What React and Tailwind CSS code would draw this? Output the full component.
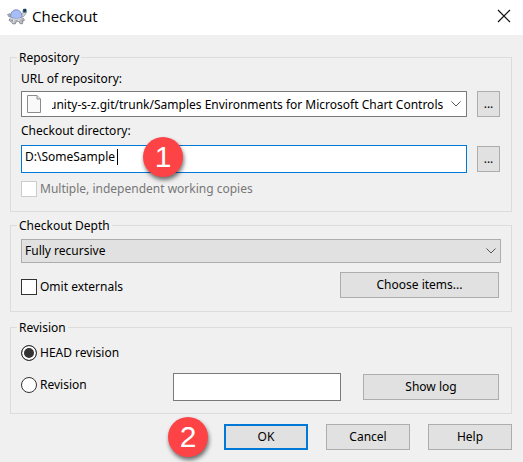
import { useEffect, useRef } from "react";

const BUTTON =
  "h-[26px] border border-[#adadad] bg-[#e1e1e1] text-center leading-4";

function Turtle() {
  return (
    <svg width="20" height="17" viewBox="0 0 20 17" aria-hidden="true">
      <path d="M.5 6.500 3 5.600l2 2.400-3 1z" fill="#a9acb4" stroke="#8c909a" strokeWidth=".7" />
      <path d="M3.500 10 2 12.200l1.400 1.200 2.100-1-.8 2.200 1 1.200h2.600l1.200-2.600h2.200l1.400 2.400 2.200.2.5-1.200-.7-1.800 1.600.2.7-1.200-1.800-2z" fill="#b9bbc1" stroke="#747882" strokeWidth=".8" />
      <path d="M14 7.200 16 5 15.800 2.400 18.200.8l1.200 1v2.800l-2 3.200-2.800 2z" fill="#d0d2d8" stroke="#8c909a" strokeWidth=".7" />
      <path d="M3.600 9.200C3.400 4.600 5.600 1.800 9.200 1.800s5.600 2.800 5.800 7.400c-3 1.800-8.400 1.800-11.400 0z" fill="#a6bdf8" stroke="#7685b0" strokeWidth=".9" />
      <path d="M2.800 9.600c2.600 2 9.600 2 12.800 0" fill="none" stroke="#e2e3e8" strokeWidth="1" />
      <path d="M6 12.500h1.500M11 12.500h1.500M5.500 14h1.500" stroke="#eeeeee" strokeWidth=".9" />
      <rect x="16.200" y=".9" width="3" height="3.600" fill="#123f5c" />
    </svg>
  );
}

function PageIcon() {
  return (
    <svg width="16" height="20" viewBox="0 0 16 20" className="shrink-0" aria-hidden="true">
      <path d="M1.500 1.500h9.500l3.500 3.500v13.500h-13z" fill="#f9f9f9" stroke="#8c8c8c" />
      <path d="M11 1.500v3.500h3.500" fill="#e4e4e4" stroke="#8c8c8c" />
    </svg>
  );
}

function Chevron() {
  return (
    <svg width="10" height="6" viewBox="0 0 10 6" className="shrink-0" aria-hidden="true">
      <path d="M.5.5 5 5 9.500.5" fill="none" stroke="#555" />
    </svg>
  );
}

function Badge({ children, className }) {
  return (
    <span
      className={`absolute flex size-10 items-center justify-center rounded-full bg-[#fd4345] font-['Liberation_Sans',Arial,sans-serif] text-[30px] leading-none text-white shadow-[1px_3px_4px_rgba(0,0,0,0.55)] ${className}`}
    >
      {children}
    </span>
  );
}

function Group({ title, className, children }) {
  return (
    <fieldset className={`min-w-0 border border-[#dcdcdc] px-2.5 ${className}`}>
      <legend className="-ml-1 h-[15px] px-0.5 leading-[15px]">{title}</legend>
      {children}
    </fieldset>
  );
}

function Radio({ label, checked }) {
  return (
    <label className="flex items-center gap-[3px] leading-4">
      <input
        type="radio"
        name="revision"
        defaultChecked={checked}
        className="size-4 appearance-none rounded-full border border-[#333] bg-white checked:bg-[#333] checked:shadow-[inset_0_0_0_2px_white]"
      />
      {label}
    </label>
  );
}

export default function App() {
  const url = useRef(null);
  useEffect(() => {
    url.current.scrollLeft = url.current.scrollWidth;
  }, []);

  return (
    <div className="min-h-screen bg-[#f0f0f0] font-['Noto_Sans',sans-serif] text-[12px] text-black">
      <header className="flex h-[35px] items-center bg-white pr-3 pb-[3px] pl-[7px]">
        <Turtle />
        <h1 className="ml-[5px] flex-1 font-['Open_Sans',sans-serif] text-[15px] leading-5">Checkout</h1>
        <button type="button" aria-label="Close">
          <svg width="14" height="14" viewBox="0 0 14 14" className="block">
            <path d="m1 1 12 12M13 1 1 13" stroke="#111" strokeWidth="1.200" />
          </svg>
        </button>
      </header>

      <main className="pt-[15px] pr-[11px] pl-2.5">
        <Group title="Repository" className="pb-3.5">
          <div className="pt-1.5 pr-px">
            <label htmlFor="url" className="block leading-4">URL of repository:</label>
            <div className="mt-1 flex items-center gap-2.5">
              <div className="flex h-[26px] min-w-0 flex-1 items-center border border-[#7a7a7a] bg-white pr-[5px] pl-1">
                <PageIcon />
                <input
                  id="url"
                  ref={url}
                  type="text"
                  defaultValue="unity-s-z.git/trunk/Samples Environments for Microsoft Chart Controls"
                  className="ml-2.5 h-5 min-w-0 flex-1 bg-transparent outline-none"
                />
                <span className="ml-2 flex"><Chevron /></span>
              </div>
              <button type="button" aria-label="Browse repository" className={`w-[23px] ${BUTTON}`}>...</button>
            </div>
            <label htmlFor="dir" className="mt-1.5 block leading-4">Checkout directory:</label>
            <div className="mt-1.5 flex items-center gap-2.5">
              <div className="relative flex h-7 flex-1 items-start border border-[#0078d7] bg-white pt-[3px] pl-[3px]">
                <input
                  id="dir"
                  type="text"
                  defaultValue="D:\SomeSample"
                  className="h-4 w-full bg-transparent outline-none"
                />
                <span className="absolute top-[3px] left-[95px] h-4 w-px bg-black" />
                <Badge className="-top-[9px] left-[121px]">1</Badge>
              </div>
              <button type="button" aria-label="Browse directory" className={`w-[23px] ${BUTTON}`}>...</button>
            </div>
            <label className="mt-2 flex items-center gap-[3px] leading-4 text-[#777]">
              <input type="checkbox" disabled className="size-4 appearance-none border border-[#ccc] bg-white" />
              Multiple, independent working copies
            </label>
          </div>
        </Group>

        <Group title="Checkout Depth" className="mt-1.5 pb-[13px]">
          <div className="relative pt-1.5">
            <select
              aria-label="Checkout Depth"
              className="block h-6 w-full appearance-none border border-[#adadad] bg-[#e1e1e1] pl-[3px] leading-4"
            >
              <option>Fully recursive</option>
            </select>
            <span className="pointer-events-none absolute right-[5px] bottom-[9px]"><Chevron /></span>
          </div>
          <div className="mt-[9px] flex items-start justify-between pr-0.5">
            <label className="flex items-center gap-[3px] pt-[7px] leading-4">
              <input type="checkbox" className="size-4 appearance-none border border-[#333] bg-white" />
              Omit externals
            </label>
            <button type="button" className={`w-[159px] ${BUTTON}`}>Choose items...</button>
          </div>
        </Group>

        <Group title="Revision" className="mt-2 pb-3">
          <div className="pt-2.5">
            <Radio label="HEAD revision" checked />
          </div>
          <div className="mt-3 flex items-center pr-0.5">
            <div className="flex-1 pb-1">
              <Radio label="Revision" />
            </div>
            <input
              type="text"
              aria-label="Revision number"
              className="h-7 w-[168px] border border-[#7a7a7a] bg-white px-1 outline-none"
            />
            <button type="button" className={`ml-[22px] w-[136px] ${BUTTON}`}>Show log</button>
          </div>
        </Group>

        <footer className="mt-2.5 flex justify-end gap-[18px] pb-3">
          <div className="relative">
            <button type="button" className="h-[26px] w-[84px] border-2 border-[#0078d7] bg-[#e1e1e1] leading-4">OK</button>
            <Badge className="-top-[7px] -left-[56px]">2</Badge>
          </div>
          <button type="button" className={`w-[84px] ${BUTTON}`}>Cancel</button>
          <button type="button" className={`w-[84px] ${BUTTON}`}>Help</button>
        </footer>
      </main>
    </div>
  );
}
